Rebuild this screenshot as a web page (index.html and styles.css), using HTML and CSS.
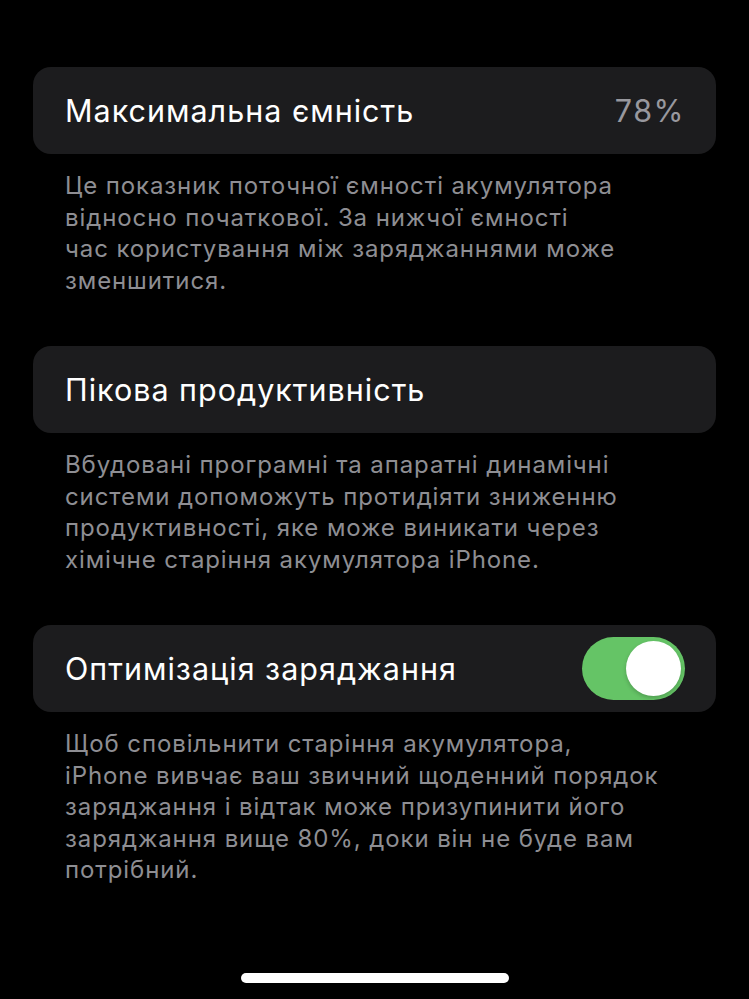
FILE: index.html
```html
<!DOCTYPE html>
<html lang="uk">
<head>
<meta charset="utf-8">
<link rel="stylesheet" href="styles.css">
</head>
<body>
<main class="screen">
  <section class="group">
    <div class="card">
      <span class="title">Максимальна ємність</span>
      <span class="value">78%</span>
    </div>
    <p class="note">Це показник поточної ємності акумулятора<br>відносно початкової. За нижчої ємності<br>час користування між заряджаннями може<br>зменшитися.</p>
  </section>
  <section class="group">
    <div class="card">
      <span class="title">Пікова продуктивність</span>
    </div>
    <p class="note">Вбудовані програмні та апаратні динамічні<br>системи допоможуть протидіяти зниженню<br>продуктивності, яке може виникати через<br>хімічне старіння акумулятора iPhone.</p>
  </section>
  <section class="group">
    <div class="card">
      <span class="title">Оптимізація заряджання</span>
      <span class="switch"><span class="knob"></span></span>
    </div>
    <p class="note">Щоб сповільнити старіння акумулятора,<br>iPhone вивчає ваш звичний щоденний порядок<br>заряджання і відтак може призупинити його<br>заряджання вище 80%, доки він не буде вам<br>потрібний.</p>
  </section>
  <div class="home-bar"></div>
</main>
</body>
</html>
```

FILE: styles.css
```css
html, body {
  margin: 0;
  padding: 0;
  background: #000;
}
.screen {
  width: 749px;
  height: 999px;
  box-sizing: border-box;
  padding: 67px 33px 0 33px;
  display: flex;
  flex-direction: column;
  font-family: Inter, "Noto Sans", sans-serif;
  position: relative;
}
.group {
  margin-bottom: 50px;
}
.card {
  height: 87px;
  background: #1c1c1e;
  border-radius: 18px;
  display: flex;
  align-items: center;
  justify-content: space-between;
  padding: 0 32px;
  box-sizing: border-box;
}
.title {
  color: #fff;
  font-size: 30.5px;
  letter-spacing: 1px;
}
.value {
  color: #98989e;
  font-size: 30.5px;
  letter-spacing: 1.5px;
  margin-right: -1px;
}
.switch {
  width: 103px;
  height: 63px;
  border-radius: 32px;
  background: #65c466;
  display: flex;
  align-items: center;
  justify-content: flex-end;
  padding: 0 4px;
  box-sizing: border-box;
  margin-right: -1px;
}
.knob {
  width: 55px;
  height: 55px;
  border-radius: 50%;
  background: #fff;
  box-shadow: 0 2px 4px rgba(0,0,0,0.2);
}
.note {
  margin: 16px 0 0 0;
  padding: 0 32px;
  color: #8e8e93;
  font-size: 24px;
  line-height: 31.5px;
  letter-spacing: 0.9px;
  white-space: nowrap;
}
.home-bar {
  position: absolute;
  left: 241px;
  top: 973px;
  width: 268px;
  height: 10px;
  border-radius: 5px;
  background: #fff;
}
```
